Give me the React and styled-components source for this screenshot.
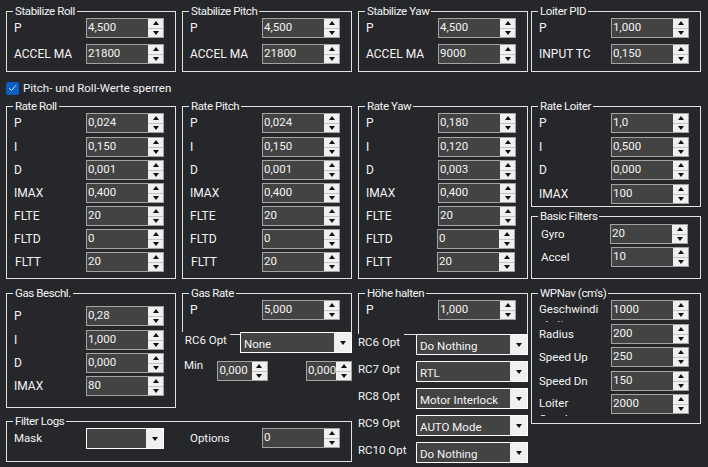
import React from 'react';
import styled, { createGlobalStyle } from 'styled-components';

const GlobalStyle = createGlobalStyle`
  html, body {
    margin: 0;
    background: #26272b;
  }
  body {
    color: #f4f4f4;
    font-family: Roboto, "Noto Sans", sans-serif;
    font-size: 11.5px;
    line-height: 16px;
  }
`;

const Page = styled.div`
  width: 708px;
  height: 467px;
  box-sizing: border-box;
  padding: 11px 0 0 6px;
  overflow: hidden;
`;

const Columns = styled.div`
  display: grid;
  grid-template-columns: 176px 176px 173px 170px;
`;

const BottomColumns = styled(Columns)`
  margin-top: 14px;
  grid-template-rows: 128px auto;
`;

const Stack = styled.div`
  display: flex;
  flex-direction: column;
  width: 170px;
  gap: ${(p) => p.$gap || 0}px;
`;

const TallStack = styled(Stack)`
  grid-column: ${(p) => p.$col};
  grid-row: 1 / 3;
`;

const Group = styled.div`
  position: relative;
  box-sizing: border-box;
  width: ${(p) => p.$w || 170}px;
  height: ${(p) => p.$h}px;
  padding: ${(p) => p.$pt ?? 6}px 0 0 7px;
  border: 1px solid #e2e2e2;
`;

const WideCell = styled.div`
  grid-column: 1 / 3;
  grid-row: 2;
`;

const Title = styled.div`
  position: absolute;
  top: -9px;
  left: 6px;
  padding: 0 2px;
  background: #26272b;
  letter-spacing: -0.4px;
  white-space: nowrap;
`;

const Row = styled.div`
  display: flex;
  height: 20px;
  margin-top: ${(p) => p.$mt || 0}px;
`;

const Label = styled.div`
  box-sizing: border-box;
  flex: none;
  width: ${(p) => p.$w || 72}px;
  height: 20px;
  padding: 2px 0 0 ${(p) => p.$indent || 0}px;
  font-size: ${(p) => (p.$caps ? '12px' : 'inherit')};
  white-space: nowrap;
  overflow: hidden;
`;

const WrapLabel = styled(Label)`
  padding: 1px 12px 0 0;
  height: 22px;
  white-space: normal;
  overflow-wrap: anywhere;
`;

const Spin = styled.div`
  flex: none;
  display: flex;
  box-sizing: border-box;
  width: ${(p) => p.$w || 78}px;
  height: 20px;
  border: 1px solid #a3a3a3;
  background: #434343;
`;

const SpinValue = styled.div`
  flex: 1;
  min-width: 0;
  padding: 0 0 0 ${(p) => p.$pad ?? 1}px;
  line-height: 16px;
  white-space: nowrap;
  overflow: hidden;
`;

const SpinButtons = styled.div`
  flex: none;
  display: flex;
  flex-direction: column;
  width: 15px;
  background: #f0f0f0;
`;

const SpinHalf = styled.div`
  flex: 1;
  display: flex;
  align-items: center;
  justify-content: center;
  border-top: ${(p) => (p.$down ? '1px solid #c4c4c4' : 'none')};
`;

const ArrowUp = styled.i`
  width: 0;
  height: 0;
  border-left: 3.5px solid transparent;
  border-right: 3.5px solid transparent;
  border-bottom: 4px solid #111;
`;

const ArrowDown = styled.i`
  width: 0;
  height: 0;
  border-left: 3.5px solid transparent;
  border-right: 3.5px solid transparent;
  border-top: 4px solid #111;
`;

const Select = styled.div`
  flex: none;
  display: flex;
  box-sizing: border-box;
  width: ${(p) => p.$w || 112}px;
  height: 21px;
  border: 1px solid #fff;
  background: #434343;
`;

const SelectText = styled.div`
  flex: 1;
  padding: 3px 0 0 3px;
  white-space: nowrap;
`;

const SelectButton = styled.div`
  flex: none;
  display: flex;
  align-items: center;
  justify-content: center;
  width: 17px;
  background: #f0f0f0;
`;

const SelectArrow = styled.i`
  width: 0;
  height: 0;
  border-left: 3.5px solid transparent;
  border-right: 3.5px solid transparent;
  border-top: 4px solid #111;
`;

const OptRow = styled.div`
  position: relative;
  display: flex;
  justify-content: space-between;
  margin-top: ${(p) => p.$mt || 6}px;
`;

const OptLabel = styled.div`
  height: 20px;
  width: ${(p) => p.$w || 46}px;
  white-space: nowrap;
  background: #26272b;
`;

const MinRow = styled.div`
  display: flex;
  margin-top: 8px;
`;

const MinLabel = styled.div`
  width: 33px;
  margin-top: -3px;
  padding-left: 2px;
  line-height: 14px;
`;

const MinSpacer = styled.div`
  width: 39px;
`;

const CheckRow = styled.div`
  display: flex;
  align-items: center;
  gap: 4px;
  height: 14px;
  margin: 9px 0 11px;
`;

const CheckBox = styled.div`
  display: flex;
  align-items: center;
  justify-content: center;
  width: 13px;
  height: 13px;
  border-radius: 2px;
  background: #0a5fc0;
`;

const Spinner = ({ value, w, pad }) => (
  <Spin $w={w}>
    <SpinValue $pad={pad}>{value}</SpinValue>
    <SpinButtons>
      <SpinHalf><ArrowUp /></SpinHalf>
      <SpinHalf $down><ArrowDown /></SpinHalf>
    </SpinButtons>
  </Spin>
);

const Dropdown = ({ value, w }) => (
  <Select $w={w}>
    <SelectText>{value}</SelectText>
    <SelectButton><SelectArrow /></SelectButton>
  </Select>
);

// rows: [label, value, margin above, label width, label indent]
const Fields = ({ rows }) => rows.map(([label, value, mt, lw, indent]) => (
  <Row key={label} $mt={mt}>
    <Label $w={lw} $indent={indent} $caps={label === label.toUpperCase()}>{label}</Label>
    <Spinner value={value} />
  </Row>
));

const rateRows = (p, i, d, imax, flte, fltd, fltt, fltdW = 72) => [
  ['P', p, 0],
  ['I', i, 4],
  ['D', d, 3],
  ['IMAX', imax, 3],
  ['FLTE', flte, 3],
  ['FLTD', fltd, 3, fltdW],
  ['FLTT', fltt, 3, fltdW, fltdW === 72 ? 1 : 0],
];

const RC_OPTS = [
  ['RC7 Opt', 'RTL'],
  ['RC8 Opt', 'Motor Interlock'],
  ['RC9 Opt', 'AUTO Mode'],
  ['RC10 Opt', 'Do Nothing'],
];

export default function App() {
  return (
    <Page>
      <GlobalStyle />
      <Columns>
        <Group $h={61}>
          <Title>Stabilize Roll</Title>
          <Fields rows={[['P', '4,500', 0], ['ACCEL MA', '21800', 6]]} />
        </Group>
        <Group $h={61}>
          <Title>Stabilize Pitch</Title>
          <Fields rows={[['P', '4,500', 0], ['ACCEL MA', '21800', 6]]} />
        </Group>
        <Group $h={61}>
          <Title>Stabilize Yaw</Title>
          <Fields rows={[['P', '4,500', 0], ['ACCEL MA', '9000', 6]]} />
        </Group>
        <Group $h={61}>
          <Title>Loiter PID</Title>
          <Fields rows={[['P', '1,000', 0], ['INPUT TC', '0,150', 6]]} />
        </Group>
      </Columns>

      <CheckRow>
        <CheckBox>
          <svg width="9" height="8" viewBox="0 0 9 8">
            <path d="M1 4.2 L3.4 6.4 L8 1.4" fill="none" stroke="#cfe2f8" strokeWidth="1" />
          </svg>
        </CheckBox>
        Pitch- und Roll-Werte sperren
      </CheckRow>

      <Columns>
        <Group $h={173}>
          <Title>Rate Roll</Title>
          <Fields rows={rateRows('0,024', '0,150', '0,001', '0,400', '20', '0', '20')} />
        </Group>
        <Group $h={173}>
          <Title>Rate Pitch</Title>
          <Fields rows={rateRows('0,024', '0,150', '0,001', '0,400', '20', '0', '20')} />
        </Group>
        <Group $h={173}>
          <Title>Rate Yaw</Title>
          <Fields rows={rateRows('0,180', '0,120', '0,003', '0,400', '20', '0', '20', 71)} />
        </Group>
        <Stack $gap={9}>
          <Group $h={101}>
            <Title>Rate Loiter</Title>
            <Fields rows={[['P', '1,0', 0], ['I', '0,500', 4], ['D', '0,000', 3], ['IMAX', '100', 4]]} />
          </Group>
          <Group $h={63} $pt={7}>
            <Title>Basic Filters</Title>
            <Fields rows={[['Gyro', '20', 0, 71, 2], ['Accel', '10', 3, 72, 2]]} />
          </Group>
        </Stack>
      </Columns>

      <BottomColumns>
        <Group $h={115} $pt={12}>
          <Title>Gas Beschl.</Title>
          <Fields rows={[['P', '0,28', 0], ['I', '1,000', 4], ['D', '0,000', 3], ['IMAX', '80', 3]]} />
        </Group>

        <Stack>
          <Group $h={42}>
            <Title>Gas Rate</Title>
            <Fields rows={[['P', '5,000', 0]]} />
          </Group>
          <OptRow $mt={-3}>
            <OptLabel $w={48}>&nbsp;RC6 Opt</OptLabel>
            <Dropdown value="None" />
          </OptRow>
          <MinRow>
            <MinLabel>Min</MinLabel>
            <Spinner value="0,000" w={51} pad={2} />
            <MinSpacer />
            <Spinner value="0,000" w={46} />
          </MinRow>
        </Stack>

        <TallStack $col={3}>
          <Group $h={42}>
            <Title>Höhe halten</Title>
            <Fields rows={[['P', '1,000', 0]]} />
          </Group>
          <OptRow $mt={-1}>
            <OptLabel>RC6 Opt</OptLabel>
            <Dropdown value="Do Nothing" />
          </OptRow>
          {RC_OPTS.map(([label, value]) => (
            <OptRow key={label}>
              <OptLabel>{label}</OptLabel>
              <Dropdown value={value} />
            </OptRow>
          ))}
        </TallStack>

        <TallStack $col={4}>
          <Group $h={131}>
            <Title>WPNav (cm's)</Title>
            <Row>
              <WrapLabel>Geschwindigkeit</WrapLabel>
              <Spinner value="1000" />
            </Row>
            <Fields rows={[['Radius', '200', 4], ['Speed Up', '250', 3], ['Speed Dn', '150', 4]]} />
            <Row $mt={3}>
              <WrapLabel>Loiter Geschw.</WrapLabel>
              <Spinner value="2000" />
            </Row>
          </Group>
        </TallStack>

        <WideCell>
          <Group $w={346} $h={41}>
            <Title>Filter Logs</Title>
            <Row>
              <Label>Mask</Label>
              <Dropdown w={78} />
              <Label $w={98} $indent={26}>Options</Label>
              <Spinner value="0" />
            </Row>
          </Group>
        </WideCell>
      </BottomColumns>
    </Page>
  );
}
